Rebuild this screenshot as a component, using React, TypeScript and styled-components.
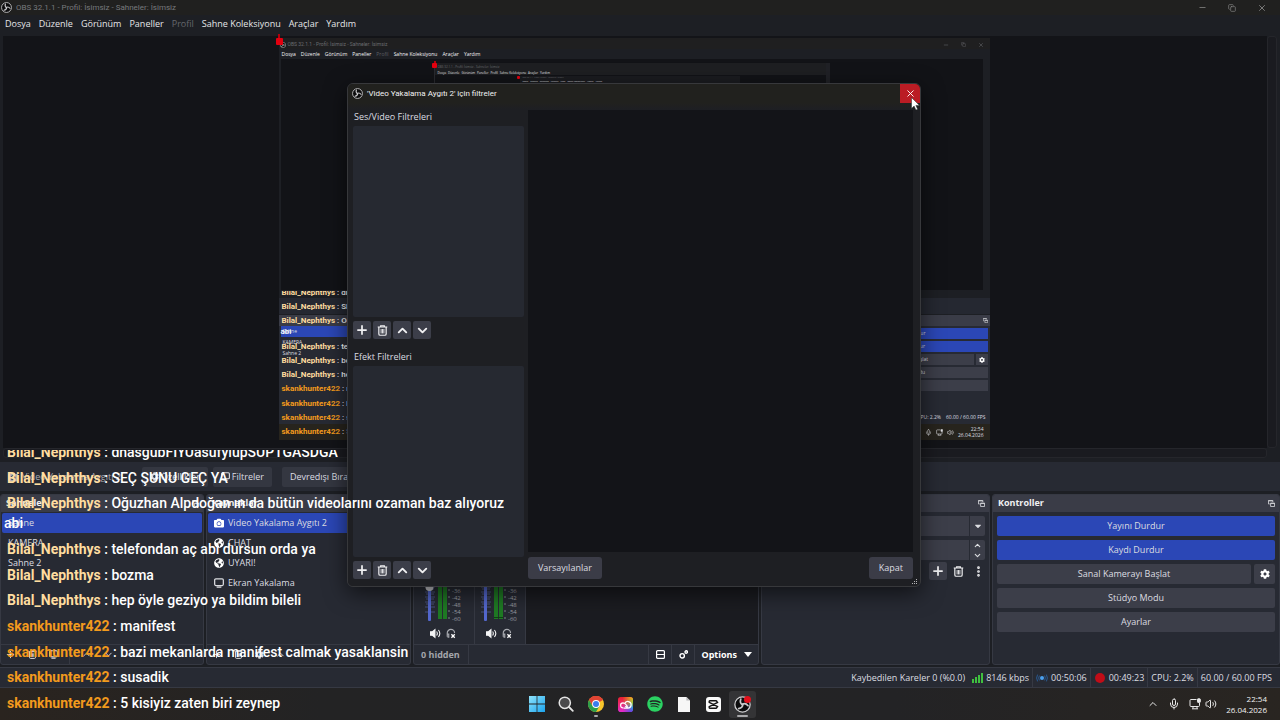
import React from "react";
import styled, { createGlobalStyle, css } from "styled-components";
import {
  Plus,
  ChevronUp,
  ChevronDown,
  X,
  Mic,
  Volume2,
  Minus,
  Copy,
  EllipsisVertical,
} from "lucide-react";
import { FaSpotify, FaGlobeAmericas, FaCamera, FaCog, FaCaretDown } from "react-icons/fa";

const c = {
  base: "#1d1f24",
  panel: "#272a33",
  header: "#3a3c47",
  button: "#3c3e49",
  blue: "#2b47b6",
  canvas: "#131418",
  line: "#363943",
  text: "#dcdde1",
  dim: "#77797d",
};

const Global = createGlobalStyle`
  * { box-sizing: border-box; }
  body { margin: 0; background: ${c.base}; color: ${c.text}; overflow: hidden;
    font: 9px/12px "Open Sans", "Noto Sans", sans-serif; }
  button, input, select { font: inherit; color: inherit; margin: 0; padding: 0; border: 0; background: none; }
  ul, h2, h3 { margin: 0; padding: 0; list-style: none; font-size: inherit; }
  svg { display: block; flex: none; }
`;

const Screen = styled.div`
  position: relative;
  display: flex;
  flex-direction: column;
  width: 100%;
  min-height: 100vh;
  overflow: hidden;
`;

/* ---------- main window top ---------- */

const TitleBar = styled.header`
  display: flex;
  align-items: center;
  gap: 4px;
  height: 15px;
  padding: 0 13px 0 1px;
  background: #20201f;
  color: ${c.dim};
  font-family: Roboto, sans-serif;
  font-size: 8px;
`;

const WindowButtons = styled.div`
  display: flex;
  margin-left: auto;
  gap: 21px;
`;

const WindowButton = styled.button`
  color: #8a8a8a;
`;

const MenuBar = styled.nav`
  display: flex;
  align-items: center;
  gap: 8px;
  height: 19px;
  padding: 0 5px 1px;
  background: ${c.base};
`;

const MenuItem = styled.button`
  color: ${(p) => (p.disabled ? "#66686d" : "#e6e6e8")};
`;

const PreviewArea = styled.main`
  flex: 1;
  display: grid;
  grid-template: minmax(0, 1fr) 10px / minmax(0, 1fr) 10px;
  padding: 2px 3px 4px;
`;

const Canvas = styled.div`
  display: flex;
  justify-content: center;
  align-items: flex-start;
  padding: 2px 2px 0 0;
  background: ${c.canvas};
`;

const ScrollTrack = styled.div`
  border: 1px solid #25262b;
  border-radius: 3px;
  background: #1a1b20;
`;

/* ---------- captured screen shown in the preview ---------- */

const Captured = styled.div`
  position: relative;
  display: flex;
  flex-direction: column;
  width: 711px;
  height: 402px;
  background: ${c.base};
  font-size: 5px;
  line-height: 7px;
`;

const Handle = styled.i<{ $size: number }>`
  position: absolute;
  top: 0;
  left: -3px;
  width: ${(p) => p.$size}px;
  height: ${(p) => p.$size}px;
  border-radius: 1px;
  background: #e3000f;
  &::before {
    content: "";
    position: absolute;
    left: 2px;
    bottom: 100%;
    width: 2px;
    height: ${(p) => p.$size - 3}px;
    background: #b3000c;
  }
`;

const CapturedTitle = styled.div`
  display: flex;
  align-items: center;
  gap: 2px;
  height: 11px;
  padding: 2px 6px 0 1px;
  background: #1f1f20;
  color: #6b6c70;
  font-family: Roboto, sans-serif;
`;

const CapturedButtons = styled.div`
  display: flex;
  gap: 12px;
  margin-left: auto;
`;

const CapturedMenu = styled.div`
  display: flex;
  align-items: center;
  gap: 5px;
  height: 10px;
  padding: 0 3px;
  color: #f4f4f5;
  & > .off {
    color: #5c5e63;
  }
`;

const CapturedPreview = styled.div`
  flex: 1;
  display: flex;
  justify-content: center;
  margin: 0 7px 8px 2px;
  background: #121317;
`;

const CapturedBar = styled.div`
  height: 16px;
  margin-bottom: 1px;
  background: #252831;
`;

const CapturedDocks = styled.div`
  display: flex;
  justify-content: space-between;
  height: 96px;
  background: ${c.panel};
`;

const CapturedDock = styled.div<{ $width: number; $list?: boolean }>`
  display: flex;
  flex-direction: column;
  gap: ${(p) => (p.$list ? 0 : 2)}px;
  width: ${(p) => p.$width}px;
  padding: 0 2px;
`;

const CapturedHeader = styled.div`
  display: flex;
  justify-content: flex-end;
  align-items: center;
  height: 11px;
  margin: 0 -2px;
  padding-right: 2px;
  background: ${c.header};
`;

const CapturedRow = styled.div<{ $on?: boolean; $flat?: boolean }>`
  display: flex;
  align-items: center;
  justify-content: ${(p) => (p.$flat ? "flex-start" : "center")};
  height: 11px;
  padding: 0 2px;
  background: ${(p) => (p.$on ? c.blue : p.$flat ? "none" : c.button)};
`;

const CapturedPair = styled.div`
  display: grid;
  grid-template-columns: 1fr 12px;
  gap: 2px;
`;

const CapturedStatus = styled.div`
  display: flex;
  align-items: center;
  justify-content: flex-end;
  gap: 5px;
  height: 13px;
  padding-right: 4px;
  background: ${c.panel};
`;

const CapturedTaskbar = styled.div`
  display: flex;
  align-items: center;
  justify-content: flex-end;
  gap: 4px;
  height: 16px;
  padding-right: 6px;
  background: #27241d;
  line-height: 6px;
  text-align: right;
`;

const InnerCapture = styled.div`
  position: relative;
  align-self: flex-start;
  width: 396px;
  height: 100px;
  margin-top: 4px;
  padding: 1px 3px;
  border-left: 1px solid #2a2b30;
  border-right: 4px solid #202126;
  background: linear-gradient(#1e1f22 12px, #121317 12px);
  color: #6b6c70;
  font-size: 3px;
  line-height: 6px;
  white-space: nowrap;
`;

const InnerMenu = styled.div`
  display: flex;
  gap: 2px;
  color: #e6e6e8;
`;

const DeepCapture = styled.div`
  position: relative;
  width: 220px;
  height: 60px;
  margin-left: 82px;
  padding: 0 3px;
  background: #1b1c20;
  font-size: 2px;
  line-height: 4px;
`;

/* ---------- source toolbar ---------- */

const SourceBar = styled.section`
  display: flex;
  align-items: center;
  gap: 5px;
  height: 29px;
  margin-bottom: 3px;
  background: ${c.panel};
`;

const SourceName = styled.span`
  display: flex;
  align-items: center;
  gap: 4px;
  width: 137px;
  padding-left: 8px;
  color: #a9abb1;
`;

const BarButton = styled.button<{ $spaced?: boolean }>`
  display: flex;
  align-items: center;
  gap: 2px;
  height: 20px;
  margin-left: ${(p) => (p.$spaced ? 5 : 0)}px;
  padding: 0 8px;
  border-radius: 2px;
  background: #343741;
`;

/* ---------- docks ---------- */

const Docks = styled.div`
  display: grid;
  grid-template-columns: 204fr 205fr 346fr 229fr 288fr;
  gap: 2px;
  height: 171px;
  margin-bottom: 2px;
`;

const Dock = styled.section`
  display: flex;
  flex-direction: column;
  min-width: 0;
  overflow: hidden;
  border: 1px solid ${c.line};
  border-radius: 3px;
  background: ${c.panel};
`;

const DockHeader = styled.h2`
  display: flex;
  align-items: center;
  justify-content: space-between;
  height: 17px;
  flex: none;
  padding: 0 4px 1px 5px;
  background: ${c.header};
  color: #f0f0f2;
  font-weight: 700;
`;

const List = styled.ul`
  flex: 1;
  padding: 1px;
`;

const ListRow = styled.li<{ $selected?: boolean }>`
  display: flex;
  align-items: center;
  gap: 4px;
  height: 20px;
  padding: 0 6px;
  border-radius: 2px;
  background: ${(p) => (p.$selected ? c.blue : "none")};
`;

const DockFooter = styled.footer`
  display: flex;
  align-items: center;
  gap: 11px;
  height: 20px;
  flex: none;
  padding: 0 4px;
  border-top: 1px solid ${c.line};
`;

const PlainIcon = styled.button`
  display: grid;
  place-items: center;
  min-width: 10px;
  height: 18px;
`;

const Divider = styled.i`
  align-self: stretch;
  width: 1px;
  background: ${c.line};
`;

const MixerBody = styled.div`
  flex: 1;
  display: flex;
  background: #1b1c21;
`;

const Channel = styled.div<{ $width: number; $pad: number }>`
  display: flex;
  flex-direction: column;
  justify-content: flex-end;
  gap: 5px;
  width: ${(p) => p.$width}px;
  padding: 0 0 5px ${(p) => p.$pad}px;
  border-right: 1px solid ${c.line};
  background: ${c.panel};
`;

const ChannelIcons = styled.div`
  display: flex;
  gap: 5px;
  padding-left: 8px;
`;

const MixerFooter = styled(DockFooter)`
  gap: 0;
  padding: 0;
  font-weight: 700;
`;

const HiddenCount = styled.span`
  padding: 0 8px 0 7px;
  color: #a3a5ab;
`;

const MixerButton = styled.button`
  display: flex;
  align-items: center;
  gap: 7px;
  height: 100%;
  padding: 0 6px 0 7px;
  border-left: 1px solid ${c.line};
  color: #fff;
  font-weight: 700;
`;

const Spacer = styled.div`
  flex: 1;
`;

const DockForm = styled.div`
  display: flex;
  flex-direction: column;
  gap: 4px;
  padding: 4px 4px 0;
`;

const Field = styled.label`
  display: flex;
  height: 20px;
  border-radius: 2px;
  background: ${c.button};
  overflow: hidden;
`;

const fieldControl = css`
  flex: 1;
  min-width: 0;
  appearance: none;
  outline: none;
`;

const Select = styled.select`
  ${fieldControl}
`;

const NumberInput = styled.input`
  ${fieldControl}
`;

const FieldEnd = styled.span`
  display: flex;
  flex-direction: column;
  align-items: center;
  justify-content: space-around;
  width: 16px;
  border-left: 1px solid ${c.panel};
`;

const FormActions = styled.div`
  display: flex;
  justify-content: flex-end;
  gap: 2px;
  margin: -2px -2px 0 0;
`;

const SquareButton = styled.button<{ $plain?: boolean }>`
  display: grid;
  place-items: center;
  width: 18px;
  height: 18px;
  border-radius: 2px;
  background: ${(p) => (p.$plain ? "none" : c.button)};
  color: #f0f0f2;
`;

const ControlButton = styled.button<{ $active?: boolean }>`
  display: grid;
  place-items: center;
  flex: 1;
  min-height: 20px;
  border-radius: 2px;
  background: ${(p) => (p.$active ? c.blue : c.button)};
`;

const ControlPair = styled.div`
  display: grid;
  grid-template-columns: 1fr 21px;
  gap: 3px;
`;

/* ---------- status bar and taskbar ---------- */

const StatusBar = styled.footer`
  display: flex;
  justify-content: flex-end;
  height: 21px;
  padding-right: 5px;
  border-top: 1px solid ${c.line};
  border-bottom: 1px solid ${c.line};
  background: ${c.panel};
`;

const StatusItem = styled.span<{ $line?: boolean }>`
  display: flex;
  align-items: center;
  gap: 3px;
  padding: 0 3px;
  border-left: 1px solid ${(p) => (p.$line ? c.line : "transparent")};
`;

const Taskbar = styled.footer`
  display: grid;
  grid-template-columns: 1fr 233px 1fr;
  align-items: center;
  height: 32px;
  background: linear-gradient(90deg, #2a241f, #232324 25%, #232325 70%, #292521);
`;

const TaskIcons = styled.div`
  grid-column: 2;
  display: flex;
  justify-content: space-between;
`;

const TaskIcon = styled.button<{ $open?: boolean; $running?: boolean }>`
  position: relative;
  display: grid;
  place-items: center;
  width: 27px;
  height: 27px;
  border-radius: 3px;
  background: ${(p) => (p.$open ? "#343436" : "none")};
  &::after {
    content: "";
    position: absolute;
    bottom: 1px;
    width: ${(p) => (p.$open ? 11 : p.$running ? 4 : 0)}px;
    height: 2px;
    border-radius: 1px;
    background: #a9a9ab;
  }
`;

const Tray = styled.div`
  display: flex;
  align-items: center;
  justify-content: flex-end;
  gap: 9px;
  padding-right: 13px;
  color: #e8e8e8;
`;

const TrayPair = styled.div`
  display: flex;
  gap: 4px;
`;

const Clock = styled.time`
  font-size: 8px;
  line-height: 11px;
  text-align: right;
  color: #f2f2f2;
`;

/* ---------- filters dialog ---------- */

const Dialog = styled.div`
  position: absolute;
  top: 83px;
  left: calc(50% - 293px);
  display: flex;
  flex-direction: column;
  width: 574px;
  height: 504px;
  overflow: hidden;
  border: 1px solid #37383b;
  border-radius: 6px;
  background: #1e1f23;
`;

const DialogShadow = styled.div`
  position: absolute;
  top: 83px;
  left: calc(50% - 293px);
  width: 574px;
  height: 504px;
  border-radius: 6px;
  box-shadow: 0 6px 22px rgba(0, 0, 0, 0.6);
`;

const DialogTitle = styled.header`
  display: flex;
  align-items: center;
  gap: 4px;
  height: 19px;
  flex: none;
  padding-left: 4px;
  background: #21211e;
  color: #f2f2f2;
  font-family: Roboto, sans-serif;
  font-size: 8px;
`;

const CloseButton = styled.button`
  display: grid;
  place-items: center;
  width: 20px;
  height: 19px;
  margin-left: auto;
  background: #bb1c24;
  color: #fff;
`;

const DialogBody = styled.div`
  flex: 1;
  display: grid;
  grid-template-columns: 171px 1fr;
  gap: 4px;
  padding: 7px 7px 7px 5px;
  background: linear-gradient(#21211e, #1e1f23 6px);
`;

const Column = styled.div`
  display: flex;
  flex-direction: column;
`;

const FilterGroup = styled.section`
  display: flex;
  flex-direction: column;
  flex: 1;
  margin-bottom: 11px;
  &:last-child {
    margin-bottom: 0;
  }
`;

const FilterLabel = styled.h3`
  height: 16px;
  padding: 1px;
  font-weight: 400;
`;

const FilterList = styled.ul`
  flex: 1;
  margin-bottom: 4px;
  border-radius: 2px;
  background: #262931;
`;

const FilterButtons = styled.div`
  display: flex;
  gap: 2px;
`;

const Properties = styled.div`
  flex: 1;
  margin-bottom: 5px;
  background: ${c.canvas};
`;

const DialogActions = styled.div`
  display: flex;
  justify-content: space-between;
`;

const DialogButton = styled.button`
  height: 22px;
  padding: 0 10px;
  border-radius: 3px;
  background: #3b3c47;
`;

const Grip = styled.svg`
  position: absolute;
  right: 2px;
  bottom: 1px;
`;

const Cursor = styled.svg`
  position: absolute;
  top: 97px;
  left: calc(50% + 271px);
`;

/* ---------- chat overlay ---------- */

const ChatClip = styled.div<{ $mini?: boolean }>`
  position: absolute;
  left: 0;
  bottom: 0;
  display: flex;
  flex-direction: column;
  justify-content: flex-end;
  height: ${(p) => (p.$mini ? 149 : 270)}px;
  padding-bottom: ${(p) => (p.$mini ? 3 : 7)}px;
  overflow: hidden;
  font: 500 ${(p) => (p.$mini ? "8px/11px" : "14px/20px")} Roboto, sans-serif;
  white-space: nowrap;
  pointer-events: none;
`;

const ChatList = styled.ul<{ $mini?: boolean }>`
  display: flex;
  flex-direction: column;
  justify-content: space-between;
  flex: none;
  height: ${(p) => (p.$mini ? 150 : 271)}px;
  padding-left: ${(p) => (p.$mini ? 2 : 4)}px;
  color: #fff;
`;

const ChatUser = styled.span<{ $orange: boolean; $mini?: boolean }>`
  margin-left: ${(p) => (p.$mini ? 1 : 3)}px;
  color: ${(p) => (p.$orange ? "#f39a1d" : "#ffdda0")};
  font-weight: 700;
`;

/* ---------- drawings ---------- */

const ObsLogo = ({ size = 11, dot = false }: { size?: number; dot?: boolean }) => (
  <svg width={size} height={size} viewBox="0 0 24 24">
    <circle cx="12" cy="12" r="10.8" fill="#0c0c0d" stroke="#cfcfd1" strokeWidth="1.8" />
    <g fill="none" stroke="#c9c9cb" strokeWidth="2.4" strokeLinecap="round">
      {[0, 120, 240].map((a) => (
        <path key={a} transform={`rotate(${a} 12 12)`} d="M12 12.5C9.6 11 8.2 8 9.6 4.4" />
      ))}
    </g>
    {dot && <circle cx="19" cy="5" r="5" fill="#e2101c" />}
  </svg>
);

const TrashIcon = ({ size = 11 }: { size?: number }) => (
  <svg width={size} height={size} viewBox="0 0 12 12" fill="none" stroke="currentColor" strokeWidth="1.3">
    <path d="M.8 2.2h10.4M4 2V.8h4V2M2 2.4v7.4q0 1.4 1.4 1.4h5.2q1.4 0 1.4-1.4V2.4" />
    <path d="M4.5 4.4v4.8M6 4.4v4.8M7.5 4.4v4.8" strokeWidth="1" />
  </svg>
);

const FloatIcon = ({ size = 7 }: { size?: number }) => (
  <svg width={size} height={size} viewBox="0 0 8 8" fill="none" stroke="#d4d5d9" strokeWidth="1">
    <path d="M2 4.5H.5v-4h5v1.8" />
    <path d="M3 3.5h4.5v4H3zM3 4h4.5M.5 1h5" />
  </svg>
);

const MonitorIcon = ({ size = 11 }: { size?: number }) => (
  <svg width={size} height={size} viewBox="0 0 12 12" fill="none" stroke="currentColor" strokeWidth="1.5">
    <rect x=".8" y="1" width="10.4" height="8" rx="1.4" />
    <path d="M3.2 10.9h5.6" />
  </svg>
);

const TrayMonitor = ({ size = 12 }: { size?: number }) => (
  <svg width={size} height={size} viewBox="0 0 12 12" fill="none" stroke="currentColor" strokeWidth="1">
    <path d="M7.5 1.5H2Q1 1.5 1 2.5v5Q1 8.5 2 8.5h7.5q1 0 1-1V5M3 10.8h6M4 8.5v2M8 8.5v2" />
    <rect x="8.5" y=".8" width="2.8" height="3.6" rx=".6" fill="currentColor" />
  </svg>
);

const SpeakerIcon = ({ size = 11 }: { size?: number }) => (
  <svg width={size} height={size} viewBox="0 0 12 12" fill="none" stroke="#f4f4f5" strokeWidth="1.2">
    <path d="M.6 4.2h1.8L5.4 1.8v8.4L2.4 7.8H.6z" fill="#f4f4f5" />
    <path d="M7.2 3.8q1.6 2.2 0 4.4M9.2 2.2q3 3.8 0 7.6" />
  </svg>
);

const MonitorOffIcon = () => (
  <svg width="10" height="11" viewBox="0 0 12 12" fill="none" stroke="#a6a8ae" strokeWidth="1.4">
    <path d="M1.5 10V5.5a4.3 4.3 0 0 1 8.8 0M1.5 6.8h1.8v3.6H1.8" />
    <path d="M6.5 7l4 4M10.5 7l-4 4" stroke="#fff" strokeWidth="1.6" />
  </svg>
);

const Fader = ({ knob }: { knob?: boolean }) => (
  <svg width="42" height="54" viewBox="4 0 42 54">
    <path
      d="M7 3h10M7 8h10M7 13h10M7 18h10M7 23h10M7 28h10M7 33h10M7 38h10M7 43h10M8 20h8M8 25h8M8 30h8M8 35h8"
      stroke="#4b5380"
      strokeWidth="1"
    />
    <rect x="10" y="0" width="3" height="52" rx="1" fill="#5468cf" />
    {knob && <circle cx="11.5" cy="18" r="4" fill="#cfd0d4" />}
    <rect x="20" y="0" width="4" height="50" fill="#1f7a24" />
    <rect x="25" y="0" width="4" height="50" fill="#1f7a24" />
    {!knob && <path d="M20 48.5h9" stroke="#0f4014" />}
    <path d="M30 21h2M30 28h2M30 35h2M30 42h2M30 49h2" stroke="#7d8087" />
    <g fill="#9a9ca2" fontSize="6" fontFamily="Open Sans">
      {[-36, -42, -48, -54, -60].map((v, i) => (
        <text key={v} x="34" y={24 + i * 7}>
          {v}
        </text>
      ))}
    </g>
  </svg>
);

const WindowsLogo = () => (
  <svg width="16" height="16" viewBox="0 0 16 16">
    <defs>
      <linearGradient id="win" x1="0" y1="0" x2="1" y2="1">
        <stop offset="0" stopColor="#8fe3fb" />
        <stop offset="1" stopColor="#1ba4ee" />
      </linearGradient>
    </defs>
    <path d="M0 0h7.6v7.6H0zM8.4 0H16v7.6H8.4zM0 8.4h7.6V16H0zM8.4 8.4H16V16H8.4z" fill="url(#win)" />
  </svg>
);

const SearchLogo = () => (
  <svg width="16" height="16" viewBox="0 0 16 16" fill="#4a4a4c" stroke="#e4e4e4" strokeLinecap="round">
    <circle cx="6.8" cy="6.8" r="5.6" strokeWidth="1.5" />
    <path d="M11 11l3.8 3.8" strokeWidth="1.8" />
  </svg>
);

const ChromeLogo = () => (
  <svg width="16" height="16" viewBox="0 0 16 16">
    <circle cx="8" cy="8" r="8" fill="#f7c52b" />
    <path d="M8 8L1.07 4A8 8 0 0 1 14.93 4z" fill="#e04434" />
    <path d="M8 4h6.93A8 8 0 0 0 1.07 4L4.5 10z" fill="#e04434" />
    <path d="M1.07 4A8 8 0 0 0 8 16l3.5-6L8 11.8 4.5 10z" fill="#2c9f4b" />
    <circle cx="8" cy="8" r="3.9" fill="#fff" />
    <circle cx="8" cy="8" r="3" fill="#3b7ded" />
  </svg>
);

const CreativeCloudLogo = () => (
  <svg width="15" height="15" viewBox="0 0 16 16">
    <defs>
      <linearGradient id="ccLeft" x1="0" y1="0" x2="0" y2="1">
        <stop offset="0" stopColor="#e8202c" />
        <stop offset=".5" stopColor="#ee2a78" />
        <stop offset="1" stopColor="#e32ad0" />
      </linearGradient>
      <linearGradient id="ccRight" x1="0" y1="0" x2="0" y2="1">
        <stop offset="0" stopColor="#f6c51c" />
        <stop offset=".4" stopColor="#8fc93a" />
        <stop offset=".7" stopColor="#2f9be6" />
        <stop offset="1" stopColor="#4a43e6" />
      </linearGradient>
      <linearGradient id="ccFade" x1="0" y1="0" x2="1" y2="0">
        <stop offset=".3" stopColor="#000" />
        <stop offset="1" stopColor="#fff" />
      </linearGradient>
      <mask id="ccMask">
        <rect width="16" height="16" fill="url(#ccFade)" />
      </mask>
    </defs>
    <rect width="16" height="16" rx="3" fill="url(#ccLeft)" />
    <rect width="16" height="16" rx="3" fill="url(#ccRight)" mask="url(#ccMask)" />
    <path
      d="M5.6 11.6a2.7 2.7 0 0 1-.2-5.4q1.4 0 2.6 1.4l2 2.4M10.6 11.8H6M10.6 11.8a3.5 3.5 0 1 0-3.4-4.6M7.6 10q1.2 1 3 .4"
      fill="none"
      stroke="#fff"
      strokeWidth="1.3"
    />
  </svg>
);

const PageLogo = () => (
  <svg width="12" height="15" viewBox="0 0 12 15">
    <path d="M0 0h8.4L12 3.6V15H0z" fill="#f6f6f6" />
    <path d="M8.4 0v3.6H12z" fill="#b9b9bb" />
  </svg>
);

const CapCutLogo = () => (
  <svg width="15" height="15" viewBox="0 0 15 15">
    <rect width="15" height="15" rx="3" fill="#fafafa" />
    <path
      d="M10.8 5V4.4q0-.6-.6-.6H3.8q-.6 0-.6.6v.9l9 4.6M10.8 10v.6q0 .6-.6.6H3.8q-.6 0-.6-.6v-.9l9-4.6"
      fill="none"
      stroke="#111"
      strokeWidth="1.4"
    />
  </svg>
);

/* ---------- data ---------- */

const menu = ["Dosya", "Düzenle", "Görünüm", "Paneller", "Profil", "Sahne Koleksiyonu", "Araçlar", "Yardım"];
const windowTitle = "OBS 32.1.1 - Profil: İsimsiz - Sahneler: İsimsiz";

const chat: { user: string; text: string; more?: string }[] = [
  { user: "Bilal_Nephthys", text: "dhasgubFIYUasufyıupSUPTGASDGA" },
  { user: "Bilal_Nephthys", text: "SEÇ ŞUNU GEÇ YA" },
  { user: "Bilal_Nephthys", text: "Oğuzhan Alpdoğan ın da bütün videolarını ozaman baz alıyoruz", more: "abi" },
  { user: "Bilal_Nephthys", text: "telefondan aç abi dursun orda ya" },
  { user: "Bilal_Nephthys", text: "bozma" },
  { user: "Bilal_Nephthys", text: "hep öyle geziyo ya bildim bileli" },
  { user: "skankhunter422", text: "manifest" },
  { user: "skankhunter422", text: "bazi mekanlarda manifest calmak yasaklansin" },
  { user: "skankhunter422", text: "susadik" },
  { user: "skankhunter422", text: "5 kisiyiz zaten biri zeynep" },
];

const Chat = ({ mini }: { mini?: boolean }) => (
  <ChatClip $mini={mini}>
    <ChatList $mini={mini}>
      {chat.map((m, i) => (
        <li key={i}>
          <ChatUser $mini={mini} $orange={m.user === "skankhunter422"}>
            {m.user}
          </ChatUser>{" "}
          : {mini ? m.text.slice(0, 2) : m.text}
          {m.more && <div>{m.more}</div>}
        </li>
      ))}
    </ChatList>
  </ChatClip>
);

const FilterTools = () => (
  <FilterButtons>
    <SquareButton aria-label="Ekle"><Plus size={14} strokeWidth={3} /></SquareButton>
    <SquareButton aria-label="Sil"><TrashIcon /></SquareButton>
    <SquareButton aria-label="Yukarı"><ChevronUp size={15} strokeWidth={3} /></SquareButton>
    <SquareButton aria-label="Aşağı"><ChevronDown size={15} strokeWidth={3} /></SquareButton>
  </FilterButtons>
);

const CapturedScreen = () => (
  <Captured>
    <Handle $size={7} />
    <CapturedTitle>
      <ObsLogo size={6} />
      {windowTitle}
      <CapturedButtons>
        <Minus size={6} />
        <Copy size={5} />
        <X size={6} />
      </CapturedButtons>
    </CapturedTitle>
    <CapturedMenu>
      {menu.map((m) => (
        <span key={m} className={m === "Profil" ? "off" : undefined}>{m}</span>
      ))}
    </CapturedMenu>
    <CapturedPreview>
      <InnerCapture>
        <Handle $size={5} />
        {windowTitle}
        <InnerMenu>
          {menu.map((m) => (
            <span key={m}>{m}</span>
          ))}
        </InnerMenu>
        <DeepCapture>
          <Handle $size={3} />
          {windowTitle}
          <InnerMenu>
            {menu.map((m) => (
              <span key={m}>{m}</span>
            ))}
          </InnerMenu>
        </DeepCapture>
      </InnerCapture>
    </CapturedPreview>
    <CapturedBar />
    <CapturedDocks>
      <CapturedDock $width={113} $list>
        <CapturedHeader />
        <CapturedRow $on $flat>Sahne</CapturedRow>
        <CapturedRow $flat>KAMERA</CapturedRow>
        <CapturedRow $flat>Sahne 2</CapturedRow>
      </CapturedDock>
      <CapturedDock $width={160}>
        <CapturedHeader><FloatIcon size={5} /></CapturedHeader>
        <CapturedRow $on>Yayını Durdur</CapturedRow>
        <CapturedRow $on>Kaydı Durdur</CapturedRow>
        <CapturedPair>
          <CapturedRow>Sanal Kamerayı Başlat</CapturedRow>
          <CapturedRow><FaCog size={6} color="#fff" /></CapturedRow>
        </CapturedPair>
        <CapturedRow>Stüdyo Modu</CapturedRow>
        <CapturedRow />
      </CapturedDock>
    </CapturedDocks>
    <CapturedStatus>
      <span>CPU: 2.2%</span>
      <span>60.00 / 60.00 FPS</span>
    </CapturedStatus>
    <CapturedTaskbar>
      <Mic size={7} />
      <TrayMonitor size={7} />
      <Volume2 size={7} />
      <div>22:54<br />26.04.2026</div>
    </CapturedTaskbar>
    <Chat mini />
  </Captured>
);

export default function App() {
  return (
    <>
      <Global />
      <Screen>
        <TitleBar>
          <ObsLogo />
          {windowTitle}
          <WindowButtons>
            <WindowButton aria-label="Küçült"><Minus size={9} /></WindowButton>
            <WindowButton aria-label="Geri yükle"><Copy size={8} /></WindowButton>
            <WindowButton aria-label="Pencereyi kapat"><X size={10} /></WindowButton>
          </WindowButtons>
        </TitleBar>
        <MenuBar>
          {menu.map((m) => (
            <MenuItem key={m} disabled={m === "Profil"}>{m}</MenuItem>
          ))}
        </MenuBar>

        <PreviewArea>
          <Canvas><CapturedScreen /></Canvas>
          <ScrollTrack />
          <ScrollTrack />
        </PreviewArea>

        <SourceBar>
          <SourceName><FaCamera size={10} />Video Yakalama Aygıtı 2</SourceName>
          <BarButton><FaCog size={9} />Özellikler</BarButton>
          <BarButton><MonitorIcon size={9} />Filtreler</BarButton>
          <BarButton $spaced>Devredışı Bırak</BarButton>
        </SourceBar>

        <Docks>
          <Dock>
            <DockHeader>Sahneler<FloatIcon /></DockHeader>
            <List>
              <ListRow $selected>Sahne</ListRow>
              <ListRow>KAMERA</ListRow>
              <ListRow>Sahne 2</ListRow>
            </List>
            <DockFooter>
              <PlainIcon aria-label="Sahne ekle"><Plus size={11} /></PlainIcon>
              <PlainIcon aria-label="Sahne sil"><TrashIcon size={9} /></PlainIcon>
              <PlainIcon aria-label="Sahne filtreleri"><MonitorIcon size={9} /></PlainIcon>
              <Divider />
              <PlainIcon aria-label="Sahne yukarı"><ChevronUp size={11} /></PlainIcon>
              <PlainIcon aria-label="Sahne aşağı"><ChevronDown size={11} /></PlainIcon>
            </DockFooter>
          </Dock>

          <Dock>
            <DockHeader>Kaynaklar<FloatIcon /></DockHeader>
            <List>
              <ListRow $selected><FaCamera size={10} color="#fff" />Video Yakalama Aygıtı 2</ListRow>
              <ListRow><FaGlobeAmericas size={10} color="#fff" />CHAT</ListRow>
              <ListRow><FaGlobeAmericas size={10} color="#fff" />UYARI!</ListRow>
              <ListRow><MonitorIcon size={10} />Ekran Yakalama</ListRow>
            </List>
            <DockFooter>
              <PlainIcon aria-label="Kaynak ekle"><Plus size={11} /></PlainIcon>
              <PlainIcon aria-label="Kaynak sil"><TrashIcon size={9} /></PlainIcon>
              <PlainIcon aria-label="Kaynak özellikleri"><FaCog size={9} /></PlainIcon>
              <PlainIcon aria-label="Kaynak yukarı"><ChevronUp size={11} /></PlainIcon>
            </DockFooter>
          </Dock>

          <Dock>
            <MixerBody>
              <Channel $width={61} $pad={8}>
                <Fader knob />
                <ChannelIcons><SpeakerIcon /><MonitorOffIcon /></ChannelIcons>
              </Channel>
              <Channel $width={51} $pad={3}>
                <Fader />
                <ChannelIcons><SpeakerIcon /><MonitorOffIcon /></ChannelIcons>
              </Channel>
            </MixerBody>
            <MixerFooter>
              <HiddenCount>0 hidden</HiddenCount>
              <Divider />
              <Spacer />
              <MixerButton aria-label="Düzen">
                <svg width="9" height="9" viewBox="0 0 9 9" fill="none" stroke="#fff" strokeWidth="1.2">
                  <rect x=".6" y=".6" width="7.8" height="7.8" rx="1" />
                  <path d="M1 4.5h7" />
                </svg>
              </MixerButton>
              <MixerButton aria-label="Gelişmiş">
                <svg width="9" height="9" viewBox="0 0 9 9" fill="none" stroke="#fff" strokeWidth="1.4">
                  <circle cx="3.2" cy="5.8" r="2.2" />
                  <circle cx="7.2" cy="2" r="1.2" />
                </svg>
              </MixerButton>
              <MixerButton>
                Options
                <svg width="8" height="5" viewBox="0 0 8 5"><path d="M0 0h8L4 5z" fill="#fff" /></svg>
              </MixerButton>
            </MixerFooter>
          </Dock>

          <Dock>
            <DockHeader><span /><FloatIcon /></DockHeader>
            <DockForm>
              <Field>
                <Select aria-label="Geçiş" />
                <FieldEnd><FaCaretDown size={10} /></FieldEnd>
              </Field>
              <Field>
                <NumberInput type="text" aria-label="Süre" />
                <FieldEnd><ChevronUp size={9} strokeWidth={3} /><ChevronDown size={9} strokeWidth={3} /></FieldEnd>
              </Field>
              <FormActions>
                <SquareButton aria-label="Geçiş ekle"><Plus size={14} strokeWidth={3} /></SquareButton>
                <SquareButton $plain aria-label="Geçiş sil"><TrashIcon /></SquareButton>
                <SquareButton $plain aria-label="Geçiş menüsü"><EllipsisVertical size={13} strokeWidth={3} /></SquareButton>
              </FormActions>
            </DockForm>
          </Dock>

          <Dock>
            <DockHeader>Kontroller<FloatIcon /></DockHeader>
            <DockForm>
              <ControlButton $active>Yayını Durdur</ControlButton>
              <ControlButton $active>Kaydı Durdur</ControlButton>
              <ControlPair>
                <ControlButton>Sanal Kamerayı Başlat</ControlButton>
                <ControlButton aria-label="Sanal kamera ayarları"><FaCog size={10} color="#fff" /></ControlButton>
              </ControlPair>
              <ControlButton>Stüdyo Modu</ControlButton>
              <ControlButton>Ayarlar</ControlButton>
            </DockForm>
          </Dock>
        </Docks>

        <StatusBar>
          <StatusItem>Kaybedilen Kareler 0 (%0.0)</StatusItem>
          <StatusItem>
            <svg width="11" height="10" viewBox="0 0 11 10" fill="#3fc03f">
              <path d="M0 6h2v4H0zM3 4h2v6H3zM6 2h2v8H6zM9 0h2v10H9z" />
            </svg>
            8146 kbps
          </StatusItem>
          <StatusItem $line>
            <svg width="12" height="8" viewBox="0 0 12 8" fill="none" stroke="#2a5a92">
              <circle cx="6" cy="4" r="2" fill="#4aa0f0" stroke="none" />
              <path d="M3.4 1.6q-1.4 2.4 0 4.8M8.6 1.6q1.4 2.4 0 4.8M1.6.6q-2 3.4 0 6.8M10.4.6q2 3.4 0 6.8" />
            </svg>
            00:50:06
          </StatusItem>
          <StatusItem $line>
            <svg width="12" height="10" viewBox="0 0 12 10"><circle cx="6" cy="5" r="5" fill="#c00d18" /></svg>
            00:49:23
          </StatusItem>
          <StatusItem $line>CPU: 2.2%</StatusItem>
          <StatusItem $line>60.00 / 60.00 FPS</StatusItem>
        </StatusBar>

        <Taskbar>
          <TaskIcons>
            <TaskIcon aria-label="Başlat"><WindowsLogo /></TaskIcon>
            <TaskIcon aria-label="Ara"><SearchLogo /></TaskIcon>
            <TaskIcon aria-label="Chrome" $running><ChromeLogo /></TaskIcon>
            <TaskIcon aria-label="Creative Cloud"><CreativeCloudLogo /></TaskIcon>
            <TaskIcon aria-label="Spotify"><FaSpotify size={16} color="#2bd162" /></TaskIcon>
            <TaskIcon aria-label="Belge"><PageLogo /></TaskIcon>
            <TaskIcon aria-label="CapCut"><CapCutLogo /></TaskIcon>
            <TaskIcon aria-label="OBS" $open><ObsLogo size={17} dot /></TaskIcon>
          </TaskIcons>
          <Tray>
            <ChevronUp size={12} />
            <Mic size={12} />
            <TrayPair>
              <TrayMonitor />
              <Volume2 size={12} />
            </TrayPair>
            <Clock>22:54<br />26.04.2026</Clock>
          </Tray>
        </Taskbar>

        <DialogShadow />
        <Dialog role="dialog" aria-labelledby="filters-title">
          <DialogTitle>
            <ObsLogo />
            <span id="filters-title">'Video Yakalama Aygıtı 2' için filtreler</span>
            <CloseButton aria-label="Kapat"><X size={11} /></CloseButton>
          </DialogTitle>
          <DialogBody>
            <Column>
              <FilterGroup>
                <FilterLabel>Ses/Video Filtreleri</FilterLabel>
                <FilterList />
                <FilterTools />
              </FilterGroup>
              <FilterGroup>
                <FilterLabel>Efekt Filtreleri</FilterLabel>
                <FilterList />
                <FilterTools />
              </FilterGroup>
            </Column>
            <Column>
              <Properties />
              <DialogActions>
                <DialogButton>Varsayılanlar</DialogButton>
                <DialogButton>Kapat</DialogButton>
              </DialogActions>
            </Column>
          </DialogBody>
          <Grip width="6" height="6" viewBox="0 0 6 6" fill="#b5b5b8">
            <path d="M4 0h1v1H4zM2 2h1v1H2zM4 2h1v1H4zM0 4h1v1H0zM2 4h1v1H2zM4 4h1v1H4z" />
          </Grip>
        </Dialog>

        <Chat />
        <Cursor width="9" height="14" viewBox="0 0 9 14">
          <path d="M.5.5v11l2.6-2.4 1.8 4 1.8-.8-1.8-3.9h3.6z" fill="#fff" stroke="#222" strokeWidth=".5" />
        </Cursor>
      </Screen>
    </>
  );
}
